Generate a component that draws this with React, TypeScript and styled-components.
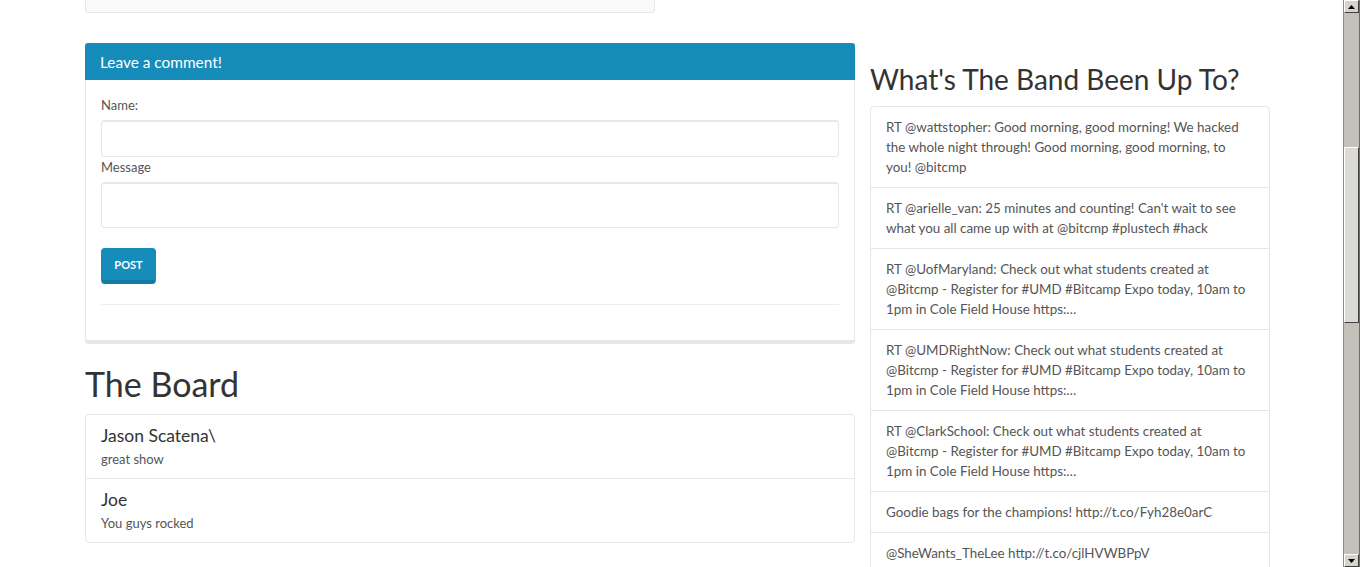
import React from 'react';
import styled, { createGlobalStyle } from 'styled-components';

const GlobalStyle = createGlobalStyle`
  html, body {
    margin: 0;
    padding: 0;
    background: #ffffff;
  }
  body {
    font-family: Lato, "Open Sans", "Liberation Sans", sans-serif;
    font-size: 14px;
    line-height: 20px;
    color: #555555;
  }
  * {
    box-sizing: border-box;
  }
`;

const Page = styled.div`
  display: flex;
  height: 567px;
  overflow: hidden;
`;

const Viewport = styled.div`
  flex: 1;
  min-width: 0;
  padding-left: 85px;
`;

const Well = styled.div`
  width: 570px;
  height: 13px;
  background: #f9f9f9;
  border: 1px solid #e7e7e7;
  border-top: none;
  border-radius: 0 0 4px 4px;
  margin-bottom: 30px;
`;

const Row = styled.div`
  display: flex;
  gap: 15px;
  align-items: flex-start;
`;

const MainColumn = styled.div`
  width: 770px;
`;

const SideColumn = styled.div`
  width: 400px;
`;

const Panel = styled.div`
  border: 1px solid #e7e7e7;
  border-top: none;
  border-bottom-width: 4px;
  border-radius: 4px;
  background: #fff;
  margin-bottom: 20px;
`;

const PanelHeading = styled.div`
  background: #158cba;
  color: #fff;
  padding: 10px 15px 9px;
  margin: 0 -1px;
  border-radius: 3px 3px 0 0;
  font-size: 15.4px;
  line-height: 18px;
`;

const PanelBody = styled.div`
  padding: 15px;
`;

const Label = styled.label`
  display: block;
  color: #555;
  font-size: 13px;
  line-height: 20px;
  margin-bottom: 5px;
`;

const Input = styled.input<{ $tall?: boolean }>`
  display: block;
  width: 100%;
  height: ${(p) => (p.$tall ? '46px' : '37px')};
  border: 1px solid #e7e7e7;
  border-top-width: 2px;
  border-radius: 4px;
  background: #fff;
  outline: none;
`;

const Field = styled.div`
  margin-bottom: 0;
`;

const PostButton = styled.button`
  display: block;
  margin-top: 20px;
  width: 55px;
  height: 36px;
  background: #158cba;
  color: #fff;
  border: 1px solid #158cba;
  border-bottom: 4px solid #127ba3;
  border-radius: 4px;
  font-family: inherit;
  font-size: 11px;
  font-weight: 700;
  text-transform: uppercase;
  padding: 0;
`;

const Rule = styled.hr`
  border: none;
  border-top: 1px solid #eeeeee;
  margin: 20px 0;
`;

const Heading = styled.h1<{ $size: number; $line: number }>`
  margin: 20px 0 10px;
  font-weight: 400;
  color: #333;
  font-size: ${(p) => p.$size}px;
  line-height: ${(p) => p.$line}px;
`;

const ListGroup = styled.div`
  border: 1px solid #e7e7e7;
  border-radius: 4px;
  background: #fff;
`;

const ListItem = styled.div<{ $shift?: boolean }>`
  padding: ${(p) => (p.$shift ? '11px 15px 9px' : '10px 15px')};
  border-top: 1px solid #e7e7e7;
  &:first-child {
    border-top: none;
  }
`;

const Author = styled.h4`
  margin: 0 0 4px;
  font-size: 17.5px;
  font-weight: 400;
  line-height: 19px;
  color: #333;
`;

const Message = styled.p`
  margin: 0;
  font-size: 13px;
  line-height: 20px;
`;

const Tweet = styled.div`
  font-size: 13.4px;
  line-height: 20px;
`;

const Scrollbar = styled.div`
  width: 17px;
  display: flex;
  flex-direction: column;
  background: #c4c1ba;
  border-left: 1px solid #8c8c8c;
  border-right: 1px solid #6e6e6e;
`;

const ArrowButton = styled.div`
  height: 13px;
  flex: none;
  display: flex;
  align-items: center;
  justify-content: center;
  background: #d6d3cd;
  border-top: 1px solid #ffffff;
  border-left: 1px solid #ffffff;
  border-right: 1px solid #404040;
  border-bottom: 1px solid #404040;
`;

const Track = styled.div<{ $fill?: boolean }>`
  flex: ${(p) => (p.$fill ? '1' : 'none')};
  height: ${(p) => (p.$fill ? 'auto' : '134px')};
`;

const Thumb = styled.div`
  height: 176px;
  flex: none;
  background: #dcdad5;
  border-top: 1px solid #ffffff;
  border-left: 1px solid #ffffff;
  border-right: 1px solid #404040;
  border-bottom: 1px solid #404040;
`;

const tweets = [
  'RT @wattstopher: Good morning, good morning! We hacked the whole night through! Good morning, good morning, to you! @bitcmp',
  "RT @arielle_van: 25 minutes and counting! Can't wait to see what you all came up with at @bitcmp #plustech #hack",
  'RT @UofMaryland: Check out what students created at @Bitcmp - Register for #UMD #Bitcamp Expo today, 10am to 1pm in Cole Field House https:\u2026',
  'RT @UMDRightNow: Check out what students created at @Bitcmp - Register for #UMD #Bitcamp Expo today, 10am to 1pm in Cole Field House https:\u2026',
  'RT @ClarkSchool: Check out what students created at @Bitcmp - Register for #UMD #Bitcamp Expo today, 10am to 1pm in Cole Field House https:\u2026',
  'Goodie bags for the champions! http://t.co/Fyh28e0arC',
  '@SheWants_TheLee http://t.co/cjlHVWBPpV',
];

const posts = [
  { name: 'Jason Scatena\\', text: 'great show' },
  { name: 'Joe', text: 'You guys rocked' },
];

function Arrow({ up }: { up?: boolean }) {
  return (
    <svg width="7" height="4" viewBox="0 0 7 4">
      <path d={up ? 'M3.5 0 L7 4 L0 4 Z' : 'M0 0 L7 0 L3.5 4 Z'} fill="#000" />
    </svg>
  );
}

export default function App() {
  return (
    <>
      <GlobalStyle />
      <Page>
        <Viewport>
          <Well />
          <Row>
            <MainColumn>
              <Panel>
                <PanelHeading>Leave a comment!</PanelHeading>
                <PanelBody>
                  <Field>
                    <Label>Name:</Label>
                    <Input type="text" />
                  </Field>
                  <Field>
                    <Label>Message</Label>
                    <Input type="text" $tall />
                  </Field>
                  <PostButton>Post</PostButton>
                  <Rule />
                </PanelBody>
              </Panel>
              <Heading $size={34} $line={40}>
                The Board
              </Heading>
              <ListGroup>
                {posts.map((post) => (
                  <ListItem key={post.name} $shift>
                    <Author>{post.name}</Author>
                    <Message>{post.text}</Message>
                  </ListItem>
                ))}
              </ListGroup>
            </MainColumn>
            <SideColumn>
              <Heading $size={28} $line={33} as="h2">
                What's The Band Been Up To?
              </Heading>
              <ListGroup>
                {tweets.map((tweet) => (
                  <ListItem key={tweet}>
                    <Tweet>{tweet}</Tweet>
                  </ListItem>
                ))}
              </ListGroup>
            </SideColumn>
          </Row>
        </Viewport>
        <Scrollbar>
          <ArrowButton>
            <Arrow up />
          </ArrowButton>
          <Track />
          <Thumb />
          <Track $fill />
          <ArrowButton>
            <Arrow />
          </ArrowButton>
        </Scrollbar>
      </Page>
    </>
  );
}
